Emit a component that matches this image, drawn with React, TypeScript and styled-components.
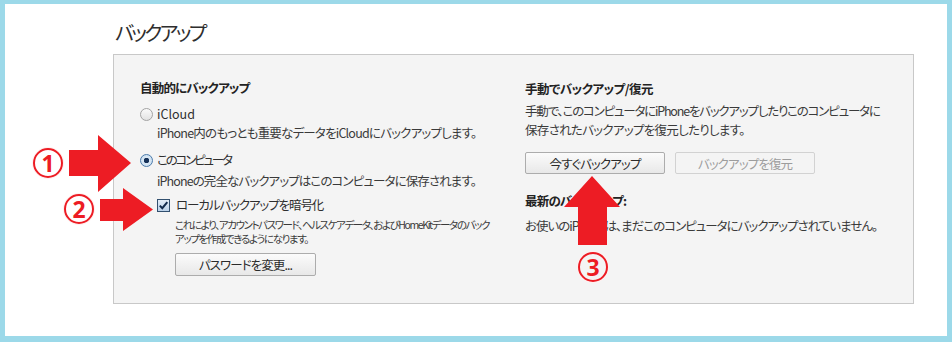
import React from 'react'
import styled, { createGlobalStyle } from 'styled-components'

const GlobalStyle = createGlobalStyle`
  html, body {
    margin: 0;
    padding: 0;
    background: #ffffff;
  }
  body {
    font-family: 'Noto Sans CJK JP', 'Noto Sans', sans-serif;
    font-feature-settings: 'palt';
    letter-spacing: -1px;
    color: #3a3a3a;
  }
`

const RED = '#ed1c24'

const Page = styled.div`
  position: relative;
  box-sizing: border-box;
  width: 952px;
  height: 342px;
  padding: 4px 5px 6px 5px;
  background: #9cd9e9;
  display: flex;
`

const Sheet = styled.div`
  flex: 1;
  background: #ffffff;
  padding: 15px 0 0 108px;
  display: flex;
  flex-direction: column;
`

const Title = styled.h1`
  margin: 0 0 7px 2px;
  font-size: 20px;
  line-height: 28px;
  font-weight: 400;
  letter-spacing: -2.6px;
  color: #2e2e2e;
`

const Panel = styled.section`
  width: 801px;
  height: 250px;
  box-sizing: border-box;
  background: #f4f4f4;
  border: 1px solid #c8c8c8;
  padding: 24px 0 0 26px;
  display: grid;
  grid-template-columns: 385px 1fr;
`

const Column = styled.div`
  display: flex;
  flex-direction: column;
  align-items: flex-start;
`

const Heading = styled.h2<{ $mt?: number; $ls?: number }>`
  margin: ${x => x.$mt || 0}px 0 0 0;
  font-size: 12.5px;
  line-height: 18px;
  font-weight: 700;
  letter-spacing: ${x => x.$ls ?? -0.8}px;
  color: #222;
  white-space: nowrap;
`

const Option = styled.label<{ $mt: number; $indent?: number; $ls?: number }>`
  display: flex;
  align-items: center;
  gap: 4px;
  margin: ${x => x.$mt}px 0 0 ${x => x.$indent || 0}px;
  font-size: 12.5px;
  line-height: 18px;
  letter-spacing: ${x => x.$ls ?? -1}px;
  color: #2e2e2e;
  white-space: nowrap;
`

const Desc = styled.p<{ $mt: number; $indent?: number; $lh?: number; $ls?: number }>`
  margin: ${x => x.$mt}px 0 0 ${x => x.$indent || 0}px;
  font-size: 12.5px;
  line-height: ${x => x.$lh || 18}px;
  letter-spacing: ${x => x.$ls ?? -0.9}px;
  color: #3a3a3a;
  white-space: nowrap;
`

const Note = styled.p`
  margin: 4px 0 0 35px;
  font-size: 10.5px;
  line-height: 14px;
  letter-spacing: -1.4px;
  color: #3a3a3a;
  white-space: nowrap;
`

const ButtonRow = styled.div`
  display: flex;
  gap: 10px;
  margin-top: 13px;
`

const Button = styled.button<{ $w: number; $h: number; $ml?: number; $mt?: number }>`
  width: ${x => x.$w}px;
  height: ${x => x.$h}px;
  margin: ${x => x.$mt || 0}px 0 0 ${x => x.$ml || 0}px;
  padding: 0;
  box-sizing: border-box;
  font-family: inherit;
  font-feature-settings: 'palt';
  font-size: 12.5px;
  letter-spacing: -0.9px;
  color: #2a2a2a;
  border: 1px solid #acacac;
  border-radius: 2px;
  background: linear-gradient(#fbfbfb, #e8e8e8);

  &:disabled {
    color: #9d9d9d;
    border-color: #d2d2d2;
    background: #f4f4f4;
  }
`

const RadioCircle = styled.span<{ $on?: boolean }>`
  width: 13px;
  height: 13px;
  box-sizing: border-box;
  border-radius: 50%;
  border: 1px solid ${x => (x.$on ? '#4b7bab' : '#a3a3a3')};
  background: ${x =>
    x.$on
      ? 'radial-gradient(circle, #16325a 0 2.5px, #d9e8f5 3px, #c4d9ec 100%)'
      : 'linear-gradient(#fafafa, #e2e2e2)'};
  flex: none;
`

const CheckBox = styled.svg`
  width: 13px;
  height: 13px;
  flex: none;
  margin-right: 2px;
`

const Badge = styled.span<{ $x: number; $y: number }>`
  position: absolute;
  left: ${x => x.$x}px;
  top: ${x => x.$y}px;
  width: 30px;
  height: 30px;
  box-sizing: border-box;
  border: 2px solid ${RED};
  border-radius: 50%;
  display: flex;
  align-items: center;
  justify-content: center;
  font-family: 'Noto Sans', sans-serif;
  font-weight: 700;
  font-size: 23px;
  line-height: 1;
  letter-spacing: 0;
  color: ${RED};
  box-shadow: 0 0 0 1px #fff0f0;
`

const Arrow = styled.svg<{ $x: number; $y: number }>`
  position: absolute;
  left: ${x => x.$x}px;
  top: ${x => x.$y}px;
`

const Checked = () => (
  <CheckBox viewBox="0 0 13 13">
    <defs>
      <linearGradient id="cb" x1="0" y1="0" x2="0" y2="1">
        <stop offset="0" stopColor="#e4eef8" />
        <stop offset="1" stopColor="#b9d0e8" />
      </linearGradient>
    </defs>
    <rect x="0.5" y="0.5" width="12" height="12" fill="url(#cb)" stroke="#32506f" />
    <path d="M2.8 6.6 L5.3 9.2 L10.3 3.2" fill="none" stroke="#112a4c" strokeWidth="2" />
  </CheckBox>
)

const App: React.FC = () => {
  return (
    <>
      <GlobalStyle />
      <Page>
        <Sheet>
          <Title>バックアップ</Title>
          <Panel>
            <Column>
              <Heading>自動的にバックアップ</Heading>
              <Option $mt={8} $ls={0}>
                <RadioCircle />
                iCloud
              </Option>
              <Desc $mt={1} $indent={17} $ls={-0.8}>
                iPhone内のもっとも重要なデータをiCloudにバックアップします。
              </Desc>
              <Option $mt={9} $ls={-2.2}>
                <RadioCircle $on />
                このコンピュータ
              </Option>
              <Desc $mt={3} $indent={17}>
                iPhoneの完全なバックアップはこのコンピュータに保存されます。
              </Desc>
              <Option $mt={6} $indent={17} $ls={-1.1}>
                <Checked />
                ローカルバックアップを暗号化
              </Option>
              <Note>
                これにより、アカウントパスワード、ヘルスケアデータ、およびHomeKitデータのバック
                <br />
                アップを作成できるようになります。
              </Note>
              <Button $w={141} $h={23} $ml={35} $mt={7}>
                パスワードを変更...
              </Button>
            </Column>
            <Column>
              <Heading $mt={1} $ls={-0.5}>手動でバックアップ/復元</Heading>
              <Desc $mt={3} $lh={19} $ls={-1.2}>
                手動で、このコンピュータにiPhoneをバックアップしたりこのコンピュータに
              </Desc>
              <Desc $mt={0} $lh={19} $ls={-0.7}>
                保存されたバックアップを復元したりします。
              </Desc>
              <ButtonRow>
                <Button $w={140} $h={22}>今すぐバックアップ</Button>
                <Button $w={140} $h={22} disabled>
                  バックアップを復元
                </Button>
              </ButtonRow>
              <Heading $mt={18}>最新のバックアップ:</Heading>
              <Desc $mt={7} $ls={-1}>
                お使いのiPhoneは、まだこのコンピュータにバックアップされていません。
              </Desc>
            </Column>
          </Panel>
        </Sheet>

        <Badge $x={33} $y={148}>1</Badge>
        <Arrow $x={69} $y={135} width="63" height="57" viewBox="0 0 63 57">
          <polygon points="0,15 29,15 29,0 62,28 29,57 29,41 0,41" fill={RED} />
        </Arrow>

        <Badge $x={64} $y={194}>2</Badge>
        <Arrow $x={100} $y={188} width="54" height="44" viewBox="0 0 54 44">
          <polygon points="0,11 23,11 23,0 53,21.5 23,43 23,33 0,33" fill={RED} />
        </Arrow>

        <Arrow $x={564} $y={176} width="57" height="70" viewBox="0 0 57 70">
          <polygon points="28,0 56,31 43,31 43,69 14,69 14,31 0,31" fill={RED} />
        </Arrow>
        <Badge $x={578} $y={252}>3</Badge>
      </Page>
    </>
  )
}

export default App
